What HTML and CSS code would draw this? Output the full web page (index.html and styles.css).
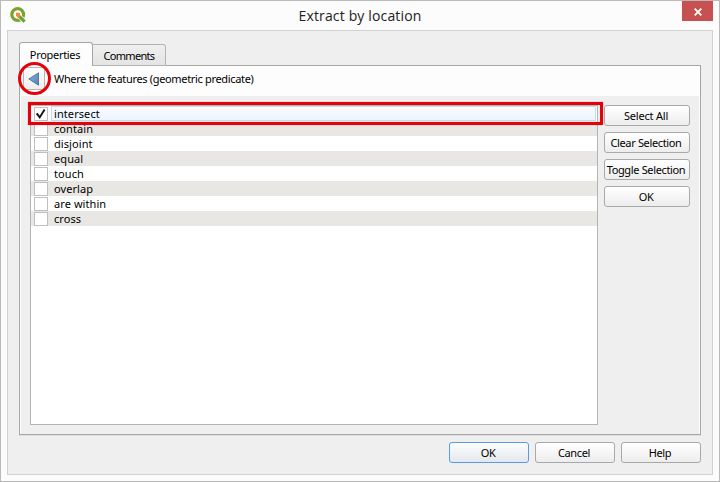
FILE: index.html
```html
<!DOCTYPE html>
<html lang="en">
<head>
<meta charset="utf-8">
<title>Extract by location</title>
<link rel="stylesheet" href="styles.css">
</head>
<body>
<div class="window">
  <header class="titlebar">
    <svg class="logo" width="17" height="17" viewBox="0 0 17 17">
      <circle cx="7.7" cy="7.5" r="5.9" fill="none" stroke="#7ba22d" stroke-width="3.2"/>
      <path d="M9.5 9.5L14 14.2" stroke="#fcfcfc" stroke-width="4.6"/>
      <path d="M9.3 9.3L14.6 14.6" stroke="#68a536" stroke-width="3.2"/>
      <path d="M6 5.8h4v4l-1.5 1.5L6 8.8z" fill="#f08a3b"/>
    </svg>
    <h1 class="title"><span>Extract by location</span></h1>
    <button class="close" aria-label="Close"><svg width="8" height="8" viewBox="0 0 8 8"><path d="M.7 .7L7.3 7.3M7.3 .7L.7 7.3" stroke="#fff" stroke-width="1.8"/></svg></button>
  </header>
  <main class="client">
    <nav class="tabs">
      <div class="tab active"><span>Properties</span></div>
      <div class="tab"><span>Comments</span></div>
    </nav>
    <section class="pane">
      <div class="heading">
        <button class="back" aria-label="Back">
          <svg width="12" height="14" viewBox="0 0 12 14"><defs><linearGradient id="blue" x2="1" y2="1"><stop stop-color="#8fb8dc"/><stop offset="1" stop-color="#4b7fb5"/></linearGradient></defs><path d="M.8 7L10.5 .8V13.2z" fill="url(#blue)" stroke="#3d6792" stroke-width=".8"/></svg>
          <i class="ring"></i>
        </button>
        <span class="caption">Where the features (geometric predicate)</span>
      </div>
      <div class="content">
        <div class="list">
          <div class="row current"><i class="box"><svg width="12" height="12" viewBox="0 0 12 12"><path d="M1.7 5.4L4.7 9.4L9.6 1.5" fill="none" stroke="#111" stroke-width="1.9"/></svg></i><div class="name">intersect</div></div>
          <div class="row"><i class="box"></i><div class="name">contain</div></div>
          <div class="row"><i class="box"></i><div class="name">disjoint</div></div>
          <div class="row"><i class="box"></i><div class="name">equal</div></div>
          <div class="row"><i class="box"></i><div class="name">touch</div></div>
          <div class="row"><i class="box"></i><div class="name">overlap</div></div>
          <div class="row"><i class="box"></i><div class="name">are within</div></div>
          <div class="row"><i class="box"></i><div class="name">cross</div></div>
          <i class="highlight"></i>
        </div>
        <div class="actions">
          <button class="btn loose">Select All</button>
          <button class="btn">Clear Selection</button>
          <button class="btn">Toggle Selection</button>
          <button class="btn">OK</button>
        </div>
      </div>
    </section>
    <footer class="footer">
      <button class="btn primary">OK</button>
      <button class="btn">Cancel</button>
      <button class="btn">Help</button>
    </footer>
  </main>
</div>
</body>
</html>
```
FILE: styles.css
```css
* { box-sizing: border-box; }
body { margin: 0; font: 11px/15px "Noto Sans", sans-serif; color: #000; }
button { font: inherit; color: inherit; padding: 0; margin: 0; }
.window { width: 720px; height: 482px; border: 1px solid #bababa; background: #fcfcfc; padding: 0 6px 6px; display: flex; flex-direction: column; }
.titlebar { height: 29px; flex: none; display: flex; align-items: flex-start; }
.logo { margin: 6px 0 0 3px; }
.title { flex: 1; margin: 5px 0 0 11px; font: 14px/20px "Open Sans", sans-serif; color: #222; text-align: center; letter-spacing: .15px; }
.close { width: 31px; height: 20px; border: 0; background: #c75050; display: flex; align-items: center; justify-content: center; padding: 1px 0 0 1px; }
.client { flex: 1; min-height: 0; border: 1px solid #d2d2d2; background: #efefef; padding: 11px 11px 0; display: flex; flex-direction: column; }
.tabs { display: flex; align-items: flex-end; height: 24px; margin-bottom: -1px; position: relative; }
.tab { width: 73px; height: 22px; border: 1px solid #b4b4b4; border-left: 0; border-radius: 0 3px 0 0; background: linear-gradient(#efefef, #e4e4e4); text-align: center; line-height: 22px; letter-spacing: -.7px; }
.tab.active { width: 74px; height: 24px; border: 1px solid #a6a6a6; border-bottom: 0; border-radius: 3px 3px 0 0; background: #fdfdfd; line-height: 24px; padding-right: 2px; letter-spacing: -.3px; }
.pane { height: 370px; width: 682px; border: 1px solid #a6a6a6; background: #efefef; box-shadow: inset 1px 0 #fdfdfd, inset -1px 0 #fdfdfd, 0 1px #e0e0e0; }
.heading { height: 30px; background: #fdfdfd; display: flex; align-items: flex-start; padding: 1px 0 0 3px; }
.back { position: relative; width: 22px; height: 23px; border: 1px solid #b5b5b5; border-radius: 3px; background: linear-gradient(#fff, #eee); display: flex; align-items: center; justify-content: center; }
.ring { position: absolute; left: -6px; top: -6px; width: 33px; height: 33px; border: 3px solid #e6000a; border-radius: 50%; }
.caption { margin: 4px 0 0 9px; white-space: nowrap; letter-spacing: -.33px; }
.content { display: flex; gap: 6px; padding: 9px 0 0 10px; }
.list { position: relative; width: 568px; height: 320px; border: 1px solid #b4b4b4; background: #fff; }
.row { height: 15px; display: flex; padding-left: 3px; letter-spacing: .08px; }
.row:nth-child(even) { background: #e8e7e3; }
.box { width: 14px; height: 14px; margin-top: 1px; border: 1px solid #bfbfbf; background: #fff; }
.box svg { display: block; }
.name { padding-left: 6px; line-height: 15px; }
.current .name { flex: 1; margin: 0 1px 0 3px; padding-left: 2px; border: 1px solid #c5daee; background: linear-gradient(#f9fcff, #edf5fd); line-height: 14px; }
.highlight { position: absolute; left: -3px; top: -4px; width: 575px; height: 23px; border: 3px solid #e6000a; box-shadow: 0 0 1px #0006; }
.actions { display: flex; flex-direction: column; gap: 6px; }
.btn { width: 86px; height: 21px; border: 1px solid #a9a9a9; border-radius: 3px; background: linear-gradient(#fff, #ededed); font: 11px/17px "Noto Sans", sans-serif; padding-right: 2px; letter-spacing: -.35px; white-space: nowrap; display: flex; justify-content: center; align-items: center; }
.loose { letter-spacing: -.2px; }
.footer { display: flex; justify-content: flex-end; gap: 6px; padding: 7px 0 0; }
.footer .btn { width: 80px; }
.footer .primary { border-color: #569de5; background: linear-gradient(#fdfdfd, #e3e8ee); }
```
